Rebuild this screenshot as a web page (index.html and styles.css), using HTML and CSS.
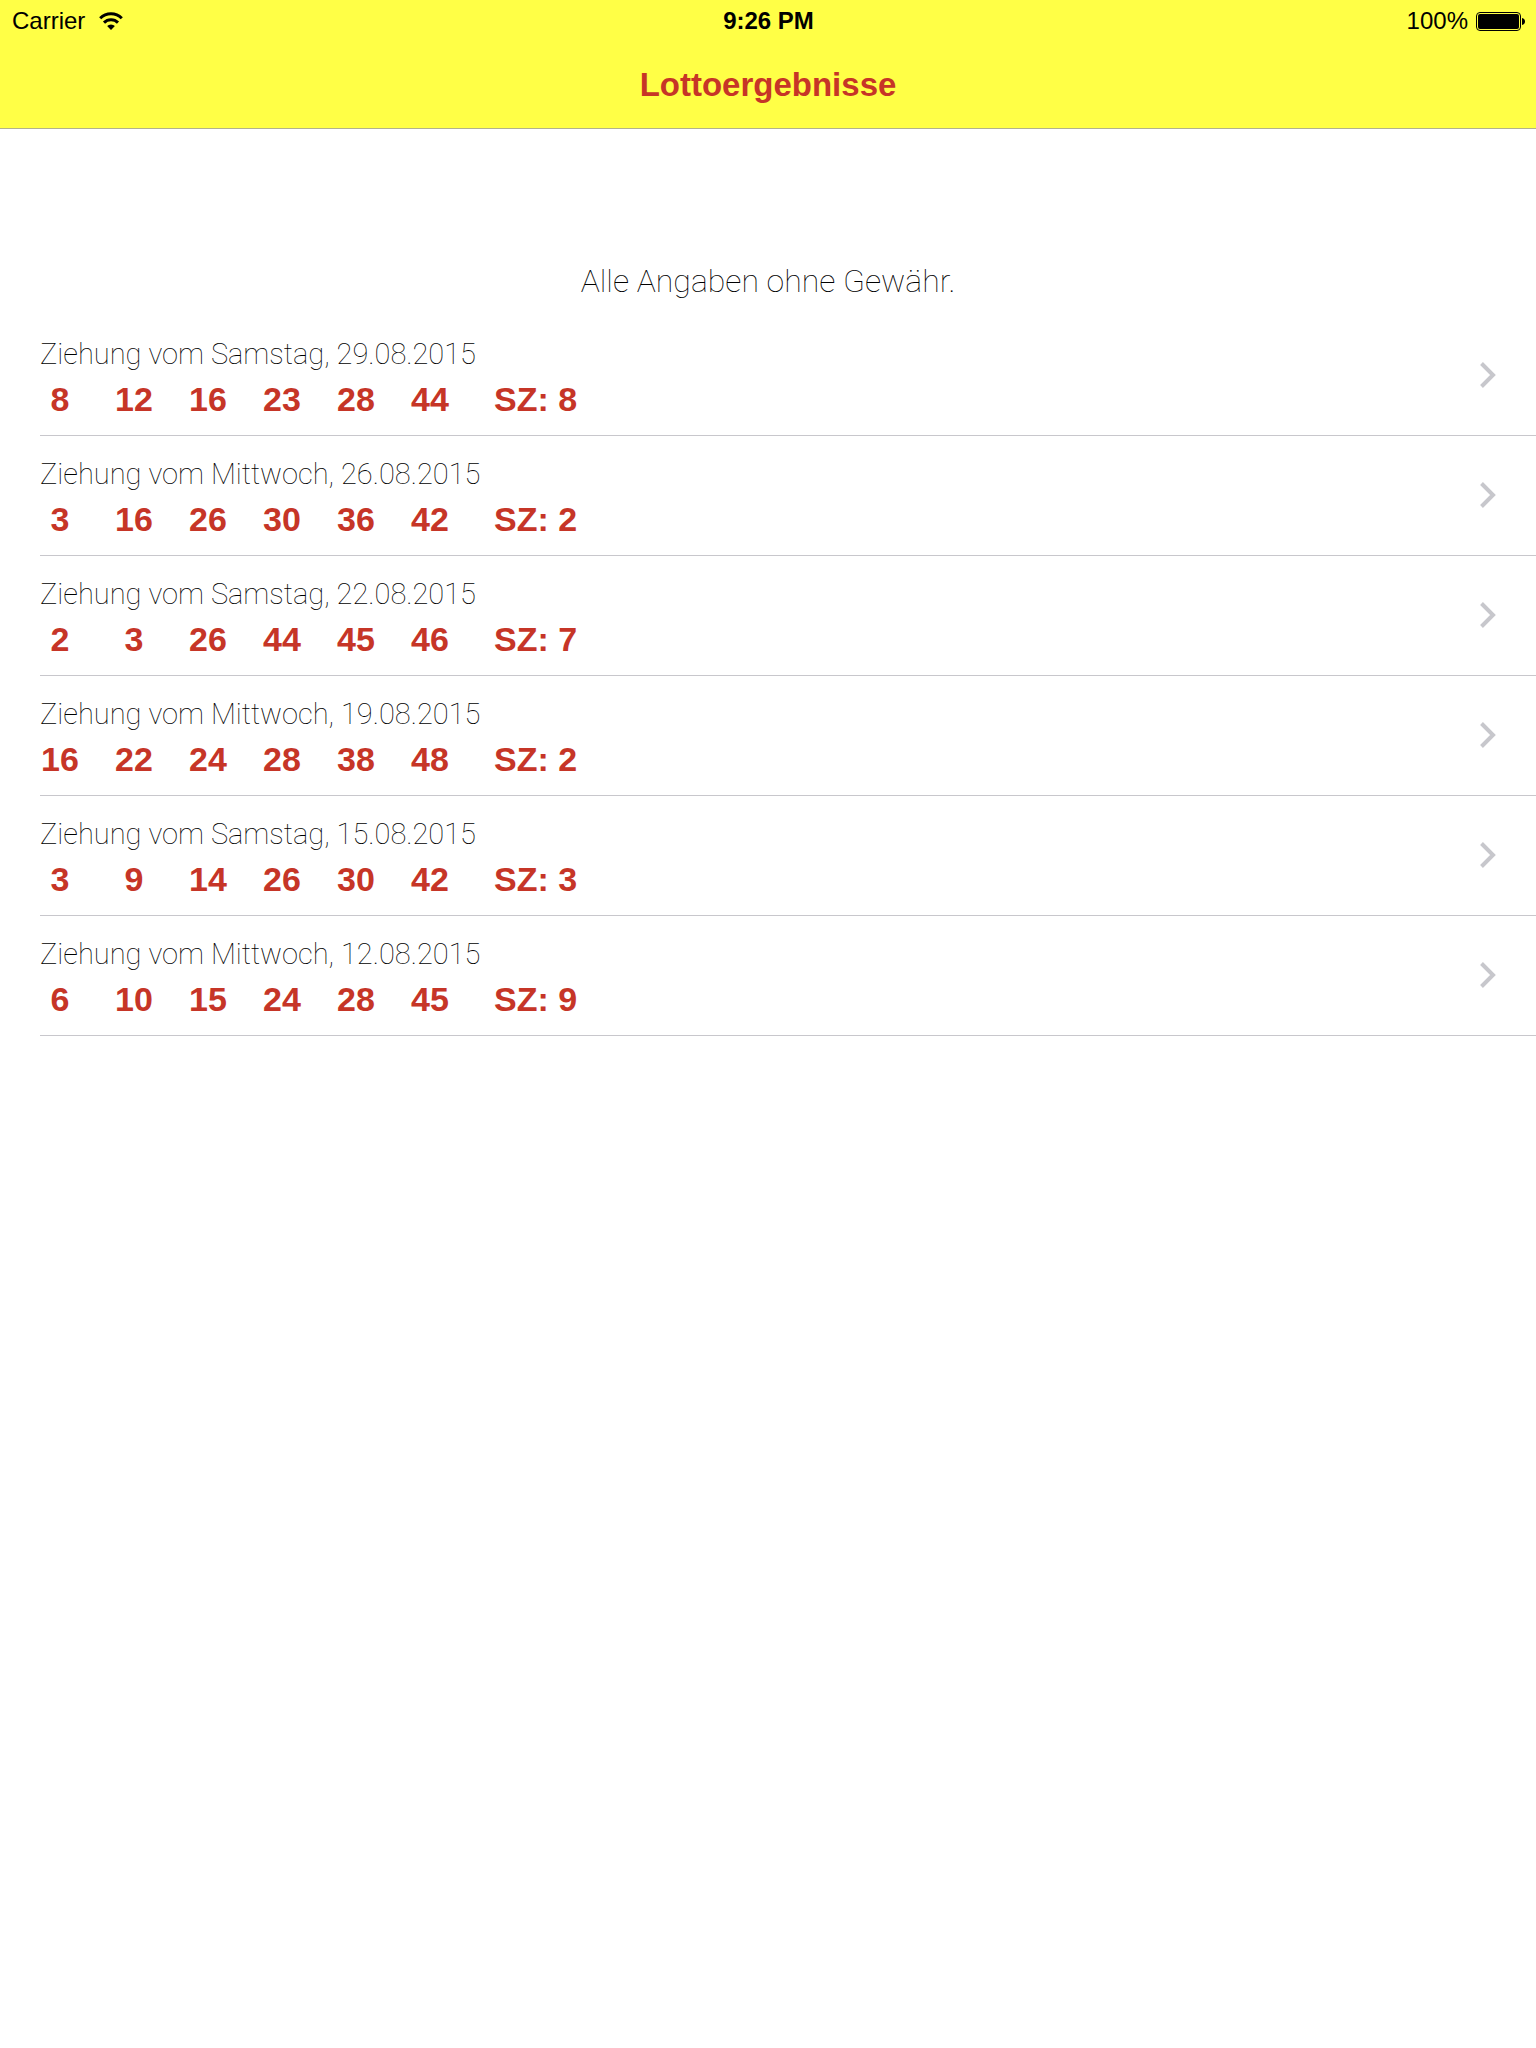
FILE: index.html
```html
<!DOCTYPE html>
<html lang="de">
<head>
  <meta charset="UTF-8" />
  <meta name="viewport" content="width=device-width, initial-scale=1.0" />
  <title>Lottoergebnisse</title>
  <link rel="stylesheet" href="styles.css">
</head>
<body>
  <header class="header">
    <div class="status-bar">
      <div class="status-left">
        <span>Carrier</span>
        <svg class="wifi" viewBox="0 0 24 18" aria-hidden="true">
          <path d="M1.2 6.2a15.3 15.3 0 0 1 21.6 0" fill="none" stroke="#000" stroke-width="3" />
          <path d="M5 10.6a9.9 9.9 0 0 1 14 0" fill="none" stroke="#000" stroke-width="3" />
          <path d="M12 18l-3.900-3.900a5.500 5.500 0 0 1 7.800 0z" />
        </svg>
      </div>
      <div class="status-time">9:26 PM</div>
      <div class="status-right">
        <span>100%</span>
        <svg class="battery" viewBox="0 0 49 19" aria-hidden="true">
          <rect x=".5" y=".5" width="44" height="18" rx="3.500" fill="none" stroke="#000" />
          <rect x="2" y="2" width="41" height="15" rx="2" />
          <path d="M46 6c2 .3 3 1.600 3 3.500s-1 3.200-3 3.500z" />
        </svg>
      </div>
    </div>
    <h1 class="title">Lottoergebnisse</h1>
  </header>

  <main>
    <p class="notice">Alle Angaben ohne Gewähr.</p>

    <ul class="draws">
      <li>
        <a class="draw" href="#2015-08-29">
          <div class="draw-info">
            <p class="draw-date">Ziehung vom Samstag, 29.08.2015</p>
            <div class="numbers">
              <span>8</span><span>12</span><span>16</span><span>23</span><span>28</span><span>44</span>
              <span class="sz">SZ: 8</span>
            </div>
          </div>
          <svg class="chevron" viewBox="0 0 16 26" aria-hidden="true"><path d="M1.500 1.500L13 13 1.500 24.500" /></svg>
        </a>
      </li>
      <li>
        <a class="draw" href="#2015-08-26">
          <div class="draw-info">
            <p class="draw-date">Ziehung vom Mittwoch, 26.08.2015</p>
            <div class="numbers">
              <span>3</span><span>16</span><span>26</span><span>30</span><span>36</span><span>42</span>
              <span class="sz">SZ: 2</span>
            </div>
          </div>
          <svg class="chevron" viewBox="0 0 16 26" aria-hidden="true"><path d="M1.500 1.500L13 13 1.500 24.500" /></svg>
        </a>
      </li>
      <li>
        <a class="draw" href="#2015-08-22">
          <div class="draw-info">
            <p class="draw-date">Ziehung vom Samstag, 22.08.2015</p>
            <div class="numbers">
              <span>2</span><span>3</span><span>26</span><span>44</span><span>45</span><span>46</span>
              <span class="sz">SZ: 7</span>
            </div>
          </div>
          <svg class="chevron" viewBox="0 0 16 26" aria-hidden="true"><path d="M1.500 1.500L13 13 1.500 24.500" /></svg>
        </a>
      </li>
      <li>
        <a class="draw" href="#2015-08-19">
          <div class="draw-info">
            <p class="draw-date">Ziehung vom Mittwoch, 19.08.2015</p>
            <div class="numbers">
              <span>16</span><span>22</span><span>24</span><span>28</span><span>38</span><span>48</span>
              <span class="sz">SZ: 2</span>
            </div>
          </div>
          <svg class="chevron" viewBox="0 0 16 26" aria-hidden="true"><path d="M1.500 1.500L13 13 1.500 24.500" /></svg>
        </a>
      </li>
      <li>
        <a class="draw" href="#2015-08-15">
          <div class="draw-info">
            <p class="draw-date">Ziehung vom Samstag, 15.08.2015</p>
            <div class="numbers">
              <span>3</span><span>9</span><span>14</span><span>26</span><span>30</span><span>42</span>
              <span class="sz">SZ: 3</span>
            </div>
          </div>
          <svg class="chevron" viewBox="0 0 16 26" aria-hidden="true"><path d="M1.500 1.500L13 13 1.500 24.500" /></svg>
        </a>
      </li>
      <li>
        <a class="draw" href="#2015-08-12">
          <div class="draw-info">
            <p class="draw-date">Ziehung vom Mittwoch, 12.08.2015</p>
            <div class="numbers">
              <span>6</span><span>10</span><span>15</span><span>24</span><span>28</span><span>45</span>
              <span class="sz">SZ: 9</span>
            </div>
          </div>
          <svg class="chevron" viewBox="0 0 16 26" aria-hidden="true"><path d="M1.500 1.500L13 13 1.500 24.500" /></svg>
        </a>
      </li>
    </ul>
  </main>
</body>
</html>
```
FILE: styles.css
```css
:root {
  --yellow: #ffff46;
  --red: #c63527;
  --line: #c8c7cc;
}

* { margin: 0; padding: 0; box-sizing: border-box; }

body {
  font-family: "Liberation Sans", Arial, sans-serif;
  background: #fff;
  color: #000;
}

/* Header */
.header {
  background: var(--yellow);
  border-bottom: 1px solid #b2b28c;
}

.status-bar {
  display: grid;
  grid-template-columns: 1fr auto 1fr;
  align-items: center;
  height: 42px;
  padding: 0 11px 0 12px;
  font-size: 24px;
}
.status-left,
.status-right {
  display: flex;
  align-items: center;
  gap: 14px;
}
.status-right {
  justify-content: flex-end;
  gap: 8px;
}
.status-time { font-weight: 700; }
.wifi { width: 24px; height: 18px; }
.battery { width: 49px; height: 19px; }

.title {
  height: 86px;
  line-height: 86px;
  text-align: center;
  font-size: 33px;
  font-weight: 700;
  color: var(--red);
}

/* Results */
.notice {
  padding: 131px 16px 14px;
  line-height: 42px;
  text-align: center;
  font-family: Roboto, "Liberation Sans", sans-serif;
  font-size: 32px;
  font-weight: 100;
}

.draws {
  list-style: none;
  padding-left: 40px;
}

.draw {
  display: flex;
  align-items: center;
  justify-content: space-between;
  padding: 15px 40px 14px 0;
  border-bottom: 1px solid var(--line);
  color: inherit;
  text-decoration: none;
}

.draw-date {
  line-height: 46px;
  font-family: Roboto, "Liberation Sans", sans-serif;
  font-size: 29px;
  font-weight: 100;
}

.numbers {
  display: flex;
  gap: 34px;
  line-height: 44px;
  font-size: 34px;
  font-weight: 700;
  color: var(--red);
}
.numbers span {
  width: 40px;
  text-align: center;
}
.numbers .sz {
  width: auto;
  margin-left: 10px;
}

.chevron {
  width: 16px;
  height: 26px;
  margin-bottom: 2px;
  fill: none;
  stroke: #c7c7cc;
  stroke-width: 4;
}
```
